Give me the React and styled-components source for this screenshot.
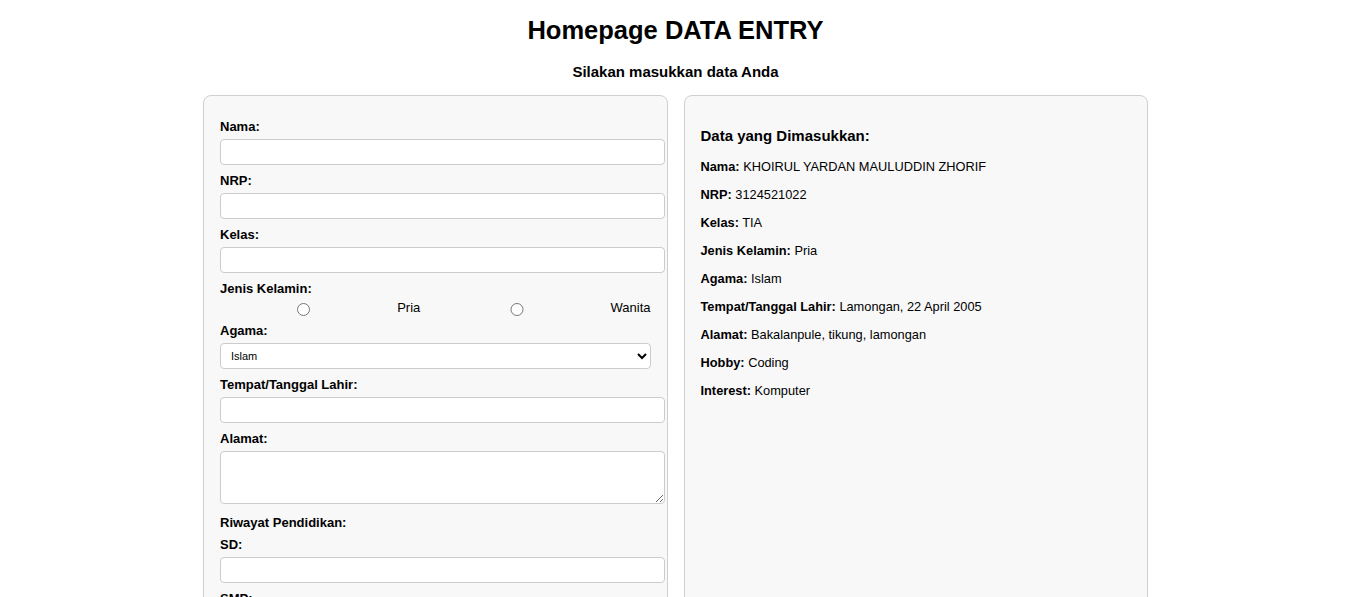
import React from 'react'
import styled, { createGlobalStyle } from 'styled-components'

const GlobalStyle = createGlobalStyle`
  body {
    margin: 0;
    background: #fff;
    color: #000;
    font-family: "Liberation Sans", Arial, sans-serif;
  }
`

const data = [
    ['Nama', 'KHOIRUL YARDAN MAULUDDIN ZHORIF'],
    ['NRP', '3124521022'],
    ['Kelas', 'TIA'],
    ['Jenis Kelamin', 'Pria'],
    ['Agama', 'Islam'],
    ['Tempat/Tanggal Lahir', 'Lamongan, 22 April 2005'],
    ['Alamat', 'Bakalanpule, tikung, lamongan'],
    ['Hobby', 'Coding'],
    ['Interest', 'Komputer'],
]

const App = () => {
    return (
        <Page>
            <GlobalStyle />
            <Title>Homepage DATA ENTRY</Title>
            <Subtitle>Silakan masukkan data Anda</Subtitle>
            <Columns>
                <FormPanel>
                    <Field>
                        <Label>Nama:</Label>
                        <TextInput type="text" />
                    </Field>
                    <Field>
                        <Label>NRP:</Label>
                        <TextInput type="text" />
                    </Field>
                    <Field>
                        <Label>Kelas:</Label>
                        <TextInput type="text" />
                    </Field>
                    <Field>
                        <Label>Jenis Kelamin:</Label>
                        <RadioRow>
                            <Radio type="radio" name="jk" value="Pria" />
                            <RadioText>Pria</RadioText>
                            <Radio type="radio" name="jk" value="Wanita" />
                            <RadioText>Wanita</RadioText>
                        </RadioRow>
                    </Field>
                    <Field>
                        <Label>Agama:</Label>
                        <Select defaultValue="Islam">
                            <option>Islam</option>
                            <option>Kristen</option>
                            <option>Katolik</option>
                            <option>Hindu</option>
                            <option>Buddha</option>
                        </Select>
                    </Field>
                    <Field>
                        <Label>Tempat/Tanggal Lahir:</Label>
                        <TextInput type="text" />
                    </Field>
                    <Field $gap={11}>
                        <Label>Alamat:</Label>
                        <TextArea />
                    </Field>
                    <SectionLabel>Riwayat Pendidikan:</SectionLabel>
                    <Field>
                        <Label>SD:</Label>
                        <TextInput type="text" />
                    </Field>
                    <Field>
                        <Label>SMP:</Label>
                        <TextInput type="text" />
                    </Field>
                    <Field>
                        <Label>SMA:</Label>
                        <TextInput type="text" />
                    </Field>
                    <Field>
                        <Label>Hobby:</Label>
                        <TextInput type="text" />
                    </Field>
                    <Field>
                        <Label>Interest:</Label>
                        <TextInput type="text" />
                    </Field>
                    <Submit type="button">Submit</Submit>
                </FormPanel>
                <ResultPanel>
                    <ResultTitle>Data yang Dimasukkan:</ResultTitle>
                    {data.map(([k, v]) => (
                        <ResultRow key={k}>
                            <strong>{k}:</strong> {v}
                        </ResultRow>
                    ))}
                </ResultPanel>
            </Columns>
        </Page>
    )
}

const Page = styled.div`
  padding: 15px 0 0 2px;
`

const Title = styled.h1`
  margin: 0;
  text-align: center;
  font-size: 25.5px;
  line-height: 30px;
  font-weight: 700;
`

const Subtitle = styled.h3`
  margin: 19px 0 15px;
  text-align: center;
  font-size: 15px;
  line-height: 16px;
  font-weight: 700;
`

const Columns = styled.div`
  display: flex;
  align-items: stretch;
  gap: 16px;
  width: 945px;
  margin: 0 auto;
`

const Panel = styled.div`
  flex: 1;
  min-width: 0;
  background: #f8f8f8;
  border: 1px solid #cfcfcf;
  border-radius: 8px;
`

const FormPanel = styled(Panel)`
  padding: 23px 16px 16px;
`

const ResultPanel = styled(Panel)`
  padding: 16px;
`

const Field = styled.div`
  margin-bottom: ${p => p.$gap ?? 8}px;
`

const Label = styled.label`
  display: block;
  margin-bottom: 4px;
  font-size: 13px;
  line-height: 16px;
  font-weight: 700;
`

const SectionLabel = styled.div`
  margin-bottom: 6px;
  font-size: 13px;
  line-height: 16px;
  font-weight: 700;
`

const TextInput = styled.input`
  display: block;
  box-sizing: content-box;
  width: 100%;
  height: 14px;
  padding: 5px 6px;
  margin: 0;
  border: 1px solid #cccccc;
  border-radius: 4px;
  background: #fff;
  font-size: 13px;
  font-family: inherit;
`

const TextArea = styled.textarea`
  display: block;
  box-sizing: content-box;
  width: 100%;
  height: 41px;
  padding: 5px 6px;
  margin: 0;
  border: 1px solid #cccccc;
  border-radius: 4px;
  background: #fff;
  font-size: 13px;
  font-family: inherit;
`

const RadioRow = styled.div`
  display: flex;
  align-items: center;
  height: 14px;
  font-size: 13px;
`

const Radio = styled.input`
  flex: 1;
  min-width: 0;
  height: 13px;
  margin: 3px 0 0;

  & + span {
    margin-left: 10px;
  }

  span + & {
    margin-left: 13px;
  }
`

const RadioText = styled.span`
  line-height: 16px;
`

const Select = styled.select`
  display: block;
  box-sizing: border-box;
  width: 100%;
  height: 26px;
  padding: 0 4px 0 6px;
  margin: 0;
  border: 1px solid #cccccc;
  border-radius: 4px;
  background: #fff;
  color: #000;
  font-size: 11px;
  font-family: inherit;
`

const Submit = styled.button`
  margin-top: 8px;
  padding: 8px 16px;
  border: none;
  border-radius: 4px;
  background: #4caf50;
  color: #fff;
  font-size: 14px;
  font-family: inherit;
`

const ResultTitle = styled.h3`
  margin: 15px 0 14px;
  font-size: 15px;
  line-height: 18px;
  font-weight: 700;
`

const ResultRow = styled.p`
  margin: 12px 0;
  font-size: 12.8px;
  line-height: 16px;

  strong {
    font-weight: 700;
  }
`

export default App
